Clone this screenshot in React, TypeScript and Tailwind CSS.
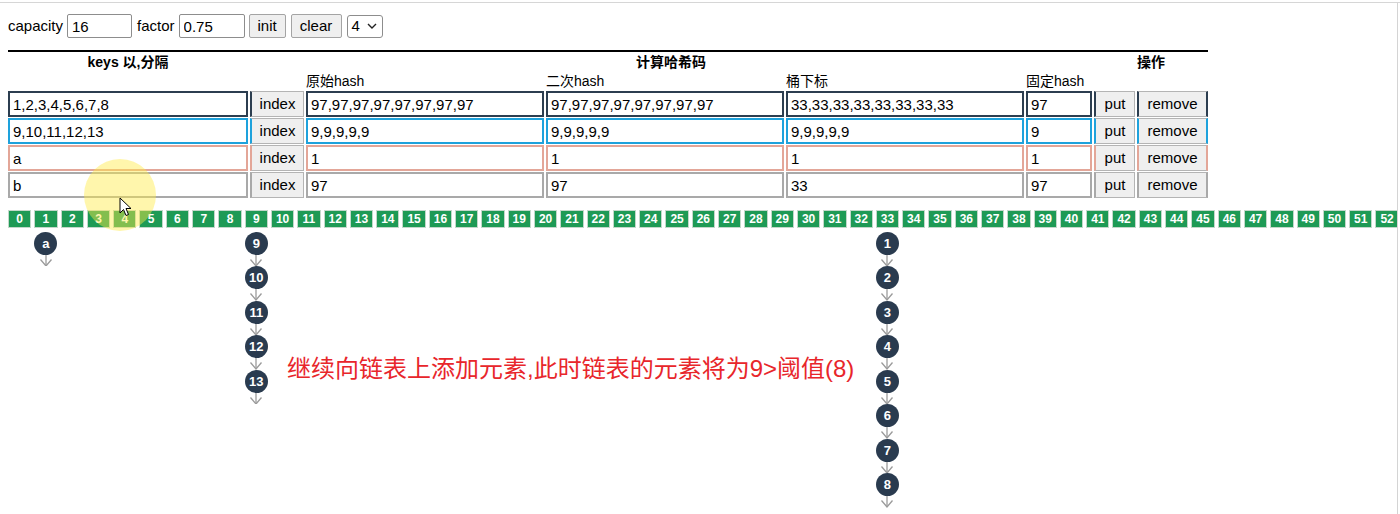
import React from "react";

// hash table demo page: controls, key/hash table, bucket strip with chains
const cols = "grid grid-cols-[240px_54px_238px_238px_238px_66px_41px_71px] gap-x-[2px]";

type Tone = "navy" | "cyan" | "salmon" | "gray";

const toneInput: Record<Tone, string> = {
  navy: "border-[#2c3e50]",
  cyan: "border-[#1ea2dc]",
  salmon: "border-[#e3a698]",
  gray: "border-[#a9a9a9]",
};
const toneLeft: Record<Tone, string> = {
  navy: "border-l-[#2c3e50]",
  cyan: "border-l-[#1ea2dc]",
  salmon: "border-l-[#e3a698]",
  gray: "border-l-[#a9a9a9]",
};
const toneRight: Record<Tone, string> = {
  navy: "border-r-[#2c3e50]",
  cyan: "border-r-[#1ea2dc]",
  salmon: "border-r-[#e3a698]",
  gray: "border-r-[#a9a9a9]",
};

const rows: { keys: string; h1: string; h2: string; idx: string; fixed: string; tone: Tone }[] = [
  {
    keys: "1,2,3,4,5,6,7,8",
    h1: "97,97,97,97,97,97,97,97",
    h2: "97,97,97,97,97,97,97,97",
    idx: "33,33,33,33,33,33,33,33",
    fixed: "97",
    tone: "navy",
  },
  { keys: "9,10,11,12,13", h1: "9,9,9,9,9", h2: "9,9,9,9,9", idx: "9,9,9,9,9", fixed: "9", tone: "cyan" },
  { keys: "a", h1: "1", h2: "1", idx: "1", fixed: "1", tone: "salmon" },
  { keys: "b", h1: "97", h2: "97", idx: "33", fixed: "97", tone: "gray" },
];

const chains: Record<number, string[]> = {
  1: ["a"],
  9: ["9", "10", "11", "12", "13"],
  33: ["1", "2", "3", "4", "5", "6", "7", "8"],
};

function Field({ value, tone }: { value: string; tone: Tone }) {
  return (
    <input
      readOnly
      value={value}
      className={`h-[26px] w-full border-2 bg-white px-[3px] text-[15px] text-black outline-none ${toneInput[tone]}`}
    />
  );
}

function RowButton({ label, tone, right }: { label: string; tone: Tone; right?: boolean }) {
  return (
    <button
      className={`h-[26px] w-full border border-[#b4b4b4] border-l-2 bg-[#efefef] text-[15px] text-black ${toneLeft[tone]} ${
        right ? `border-r-2 ${toneRight[tone]}` : ""
      }`}
    >
      {label}
    </button>
  );
}

function Arrow() {
  return (
    <svg width="14" height="11.5" viewBox="0 0 14 11.5" className="block">
      <line x1="7" y1="0" x2="7" y2="11" stroke="#9b9b9b" strokeWidth="1.3" />
      <polyline points="1.5,4.5 7,11 12.5,4.5" fill="none" stroke="#9b9b9b" strokeWidth="1.3" />
    </svg>
  );
}

export default function App() {
  const buckets = Array.from({ length: 53 }, (_, i) => i);

  return (
    <div className="relative h-[514px] w-[1400px] overflow-hidden bg-white font-['Liberation_Sans','Noto_Sans_CJK_SC',sans-serif] text-black">
      <div className="mt-[2px] h-[1px] bg-[#d6d6d6]" />
      <div className="h-[511px] w-[1398px] overflow-hidden border-r border-[#d4d4d4] px-[8px]">
        {/* controls */}
        <div className="mt-[11px] flex h-[24px] items-center text-[15px]">
          <span>capacity</span>
          <input
            readOnly
            value="16"
            className="ml-[4px] h-[24px] w-[65px] rounded-[2px] border border-[#8d8d8d] px-[4px] text-[15px] outline-none"
          />
          <span className="ml-[5px]">factor</span>
          <input
            readOnly
            value="0.75"
            className="ml-[4px] h-[24px] w-[66px] rounded-[2px] border border-[#8d8d8d] px-[4px] text-[15px] outline-none"
          />
          <button className="ml-[4px] h-[24px] w-[37px] rounded-[2px] border border-[#a4a4a4] bg-[#efefef] text-[15px]">
            init
          </button>
          <button className="ml-[5px] h-[24px] w-[51px] rounded-[2px] border border-[#a4a4a4] bg-[#efefef] text-[15px]">
            clear
          </button>
          <div className="ml-[5px] flex h-[23px] w-[36px] items-center justify-between rounded-[3px] border border-[#8d8d8d] pl-[4px] pr-[5px] text-[15px]">
            <span>4</span>
            <svg width="10" height="6" viewBox="0 0 10 6">
              <polyline points="1,1 5,5 9,1" fill="none" stroke="#222" strokeWidth="1.4" />
            </svg>
          </div>
        </div>

        {/* table */}
        <div className="mt-[12px] w-[1200px] border-t-2 border-black">
          <div className={`${cols} h-[20px] items-center text-[14px] font-bold leading-[20px]`}>
            <div className="text-center">keys 以,分隔</div>
            <div className="col-span-5 text-center">计算哈希码</div>
            <div className="col-span-2 text-center">操作</div>
          </div>
          <div className={`${cols} h-[19px] items-center text-[14px] leading-[19px]`}>
            <div className="col-start-3">原始hash</div>
            <div>二次hash</div>
            <div>桶下标</div>
            <div className="whitespace-nowrap">固定hash</div>
          </div>
          <div className="flex flex-col gap-y-[1px]">
            {rows.map((r) => (
              <div key={r.keys} className={cols}>
                <Field value={r.keys} tone={r.tone} />
                <RowButton label="index" tone={r.tone} />
                <Field value={r.h1} tone={r.tone} />
                <Field value={r.h2} tone={r.tone} />
                <Field value={r.idx} tone={r.tone} />
                <Field value={r.fixed} tone={r.tone} />
                <RowButton label="put" tone={r.tone} />
                <RowButton label="remove" tone={r.tone} right />
              </div>
            ))}
          </div>
        </div>

        {/* buckets + chains */}
        <div className="mt-[12px] flex gap-x-[3px]">
          {buckets.map((b) => (
            <div key={b} className="flex w-[23.3px] flex-none flex-col items-center">
              <div className="flex h-[18px] w-full items-center justify-center border border-[#c3d8ca] bg-[#1e9a55] text-[12px] font-bold leading-none text-white">
                {b}
              </div>
              {chains[b] ? (
                <div className="mt-[3.5px] flex flex-col items-center">
                  {chains[b].map((n) => (
                    <div key={n} className="flex flex-col items-center">
                      <div className="flex h-[23px] w-[23px] items-center justify-center rounded-full bg-[#2a3b4f] text-[13px] font-bold leading-none text-white">
                        {n}
                      </div>
                      <Arrow />
                    </div>
                  ))}
                </div>
              ) : null}
            </div>
          ))}
        </div>
      </div>

      {/* video annotation overlays */}
      <div className="pointer-events-none absolute left-[287px] top-[354px] whitespace-nowrap text-[24px] leading-[30px] text-[#e8262b]">
        继续向链表上添加元素,此时链表的元素将为9&gt;阈值(8)
      </div>
      <div className="pointer-events-none absolute left-[84px] top-[159px] h-[72px] w-[72px] rounded-full bg-[rgba(255,236,70,0.45)]" />
      <svg
        className="pointer-events-none absolute left-[119px] top-[197px]"
        width="14"
        height="20"
        viewBox="0 0 14 20"
      >
        <path d="M1 1 L1 16 L4.5 12.5 L7 18.5 L9.5 17.5 L7 11.5 L12 11.5 Z" fill="#fff" stroke="#000" strokeWidth="1" />
      </svg>
    </div>
  );
}
